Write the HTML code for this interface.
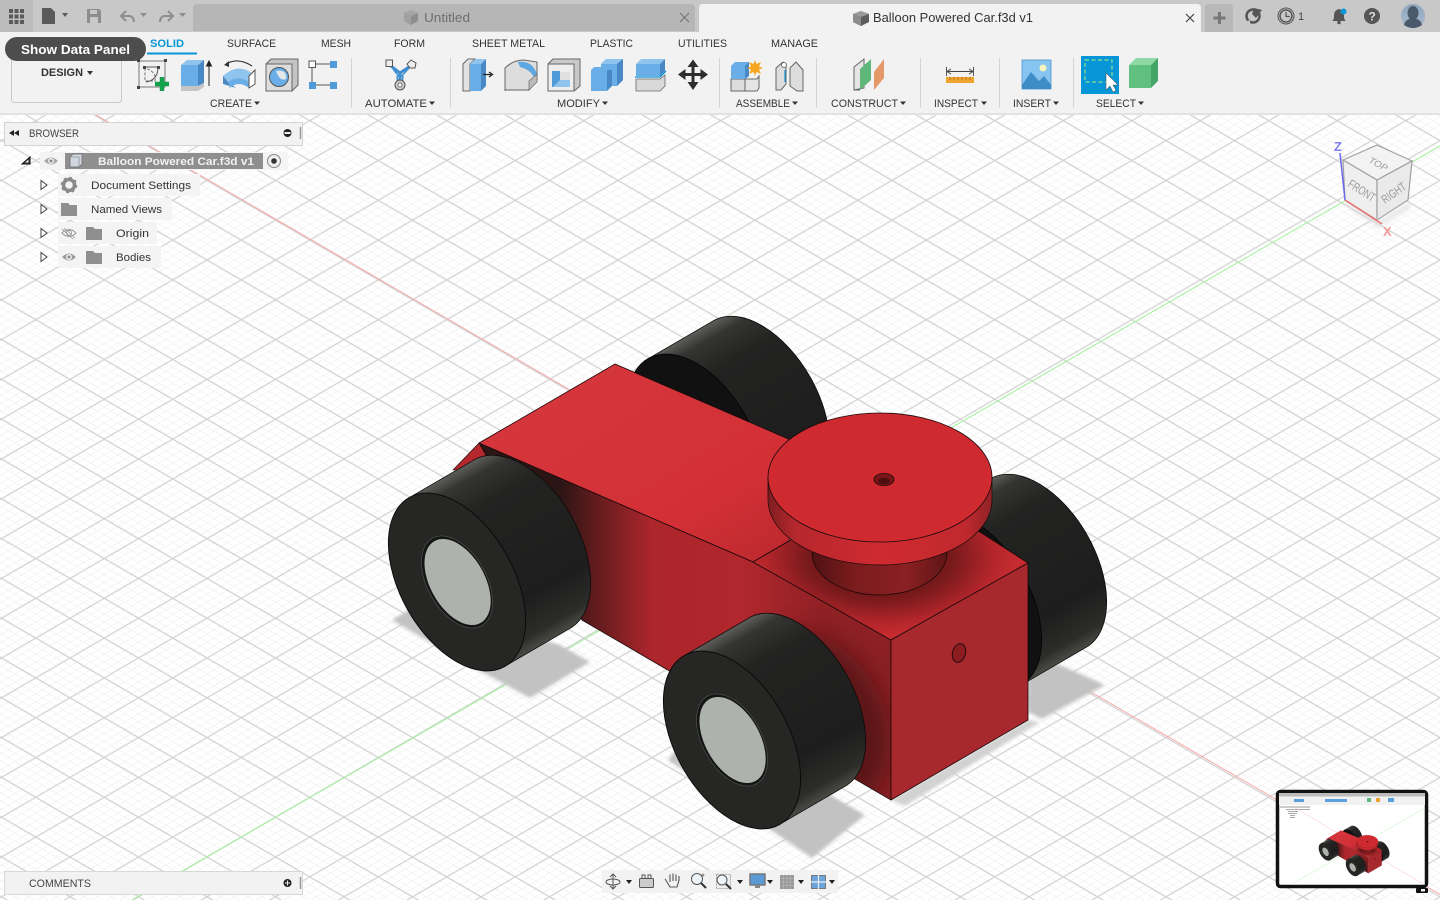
<!DOCTYPE html>
<html><head><meta charset="utf-8"><title>Balloon Powered Car.f3d v1</title>
<style>html,body{margin:0;padding:0;background:#fff;overflow:hidden}svg{display:block}
text{font-family:"Liberation Sans",sans-serif;fill:#333;font-size:11px}</style></head><body>
<svg xmlns="http://www.w3.org/2000/svg" width="1440" height="900" viewBox="0 0 1440 900">
<defs>
<pattern id="grid" patternUnits="userSpaceOnUse" width="100" height="100" patternTransform="matrix(.3425 .199 .3425 -.199 70 658)">
<path d="M20 0V100M40 0V100M60 0V100M80 0V100M0 20H100M0 40H100M0 60H100M0 80H100" stroke="#f3f3f3" stroke-width="2.400" fill="none"/>
<path d="M0 0V100M100 0V100M0 0H100M0 100H100" stroke="#d2d2d2" stroke-width="3.600" fill="none"/>
</pattern>
<filter id="b1" x="-20%" y="-20%" width="140%" height="140%"><feGaussianBlur stdDeviation="1.500"/></filter>
<filter id="b8" x="-40%" y="-40%" width="180%" height="180%"><feGaussianBlur stdDeviation="12"/></filter>
<linearGradient id="tg" gradientUnits="userSpaceOnUse" x1="-48" y1="-84" x2="48" y2="84">
<stop offset="0" stop-color="#5c5c58"/><stop offset=".07" stop-color="#343432"/><stop offset=".22" stop-color="#232322"/><stop offset=".75" stop-color="#1d1d1d"/><stop offset=".93" stop-color="#2c2c2a"/><stop offset="1" stop-color="#4c4c46"/>
</linearGradient>
<linearGradient id="side" gradientUnits="userSpaceOnUse" x1="560" y1="0" x2="890" y2="0">
<stop offset="0" stop-color="#2c1515"/><stop offset=".1" stop-color="#5e1b1c"/><stop offset=".28" stop-color="#ad262c"/><stop offset=".55" stop-color="#b0272d"/><stop offset=".8" stop-color="#8f2125"/><stop offset="1" stop-color="#8b2024"/>
</linearGradient>
<linearGradient id="topf" x1="0" y1="0" x2="1" y2="1"><stop offset="0" stop-color="#d4383d"/><stop offset=".7" stop-color="#d33036"/><stop offset="1" stop-color="#b8282d"/></linearGradient>
<radialGradient id="blk" gradientUnits="userSpaceOnUse" cx="880" cy="555" r="135" gradientTransform="translate(0 235) scale(1 .58)">
<stop offset="0" stop-color="#4a1011"/><stop offset=".55" stop-color="#7a1a1c"/><stop offset=".85" stop-color="#b4262b"/><stop offset="1" stop-color="#c62b30"/>
</radialGradient>
<linearGradient id="dsk" x1="0" y1="0" x2="1" y2="0"><stop offset="0" stop-color="#7d1d20"/><stop offset=".12" stop-color="#b5282d"/><stop offset=".5" stop-color="#cf2a30"/><stop offset=".88" stop-color="#c0292e"/><stop offset="1" stop-color="#8f2226"/></linearGradient>
<linearGradient id="cyl" x1="0" y1="0" x2="1" y2="0"><stop offset="0" stop-color="#4f1213"/><stop offset=".3" stop-color="#7a1b1d"/><stop offset=".7" stop-color="#8a2023"/><stop offset="1" stop-color="#5f1516"/></linearGradient>
<linearGradient id="av" x1="0" y1="0" x2="0" y2="1"><stop offset="0" stop-color="#8ea6bd"/><stop offset="1" stop-color="#a9bcce"/></linearGradient>
<path id="tread" d="M-48,-84.200 L19,-123.200 A56.600,97 -29.500 0 1 115,45.200 L48,84.200 A56.600,97 -29.500 0 1 -48,-84.200 Z" fill="url(#tg)" stroke="#0a0a0a" stroke-width=".8"/>
<g id="fw"><use href="#tread"/>
<ellipse rx="56.600" ry="97" transform="rotate(-29.500)" fill="#262625" stroke="#080808" stroke-width=".9"/>
<ellipse rx="29.300" ry="50.200" transform="rotate(-29.500)" fill="#151515" stroke="#555" stroke-width=".6"/>
<ellipse cx=".5" cy=".3" rx="27.200" ry="47" transform="rotate(-29.500)" fill="#adb2ad"/></g>
<g id="rw"><use href="#tread"/><ellipse rx="56.600" ry="97" transform="rotate(-29.500)" fill="#111" stroke="#050505" stroke-width=".9"/></g>
<clipPath id="sc"><path d="M479,443 L753,562 L891,640 V800 L582,620 Z"/></clipPath>
<g id="car">
<use href="#rw" x="696" y="443"/><use href="#rw" x="973" y="601"/>
<path d="M479,443 L453,470 L500,470 Z" fill="#b5292e" stroke="#1a0808" stroke-width=".6"/>
<path d="M615,364 L479,443 L753,562 L789,541 L800,444 Z" fill="url(#topf)" stroke="#1a0808" stroke-width=".8" stroke-linejoin="round"/>
<path d="M479,443 L753,562 L891,640 V800 L582,620 Z" fill="url(#side)" stroke="#1a0808" stroke-width=".8" stroke-linejoin="round"/>
<g clip-path="url(#sc)"><ellipse cx="810" cy="722" rx="74" ry="96" transform="rotate(-30 810 722)" fill="#300c0c" opacity=".55" filter="url(#b8)"/></g>
<path d="M753,562 L891,640 L1028,563 L980,532 L880,470 L789,541 Z" fill="url(#blk)" stroke="#1a0808" stroke-width=".8" stroke-linejoin="round"/>
<path d="M891,640 L1028,563 V720 L891,800 Z" fill="#a7282d" stroke="#1a0808" stroke-width=".8" stroke-linejoin="round"/>
<ellipse cx="959" cy="653" rx="6.500" ry="9.500" transform="rotate(15 959 653)" fill="#8b1c20" stroke="#1a0808" stroke-width=".9"/>
<path d="M812,553 A67.500,42 0 0 0 947,553 Z" fill="url(#cyl)" stroke="#1a0808" stroke-width=".8"/>
<path d="M768,477 V500 A112,65 0 0 0 992,500 V477 Z" fill="url(#dsk)" stroke="#1a0808" stroke-width=".7"/>
<ellipse cx="880" cy="477.500" rx="112" ry="64.500" fill="#d02a31" stroke="#1a0808" stroke-width=".8"/>
<ellipse cx="884" cy="479.500" rx="10" ry="6" fill="#7d1518" stroke="#1a0808" stroke-width=".8"/>
<ellipse cx="884" cy="481" rx="6" ry="3.200" fill="#4d0e10"/>
<use href="#fw" x="457" y="582"/><use href="#fw" x="732" y="740"/>
</g>
</defs>

<!-- viewport -->
<rect width="1440" height="900" fill="#fff"/>
<rect y="113" width="1440" height="787" fill="url(#grid)"/>
<path d="M0,59.300 L1440,894.500" stroke="#f9a8a8" stroke-width="1"/>
<path d="M132,900 L1440,146" stroke="#a6f0a0" stroke-width="1.100"/>

<!-- shadows -->
<g filter="url(#b1)" fill="#c2c2c2">
<path d="M392,620 L420,603 L560,645 L590,662 L530,698 L460,660 Z"/>
<path d="M668,760 L700,720 L865,815 L812,858 Z"/>
<path d="M1028,660 L1060,665 L1105,685 L1042,719 L1028,712 Z"/>
<path d="M891,800 L1028,720 L1040,722 L905,806 Z" fill="#d2d2d2"/>
</g>
<use href="#car"/>

<!-- view cube -->
<g>
<path d="M1343,160 L1377,145 L1412,161 L1377,180 Z" fill="#f3f3f3" stroke="#a0a0a0" stroke-width="1.200"/>
<path d="M1343,160 L1377,180 V220 L1345,200 Z" fill="#efefef" stroke="#a0a0a0" stroke-width="1.200"/>
<path d="M1377,180 L1412,161 L1408,200 L1377,220 Z" fill="#eaeaea" stroke="#a0a0a0" stroke-width="1.200"/>
<path d="M1345,200 L1377,220 L1408,202 L1412,208 L1378,229 L1350,210 Z" fill="#ddd" opacity=".5" filter="url(#b1)"/>
<text transform="translate(1368,162) rotate(28)" textLength="20" lengthAdjust="spacingAndGlyphs" style="font-size:9px;fill:#9a9a9a;font-style:italic">TOP</text>
<text transform="translate(1347,186) rotate(32)" textLength="30" lengthAdjust="spacingAndGlyphs" style="font-size:12px;fill:#9a9a9a">FRONT</text>
<text transform="translate(1385,204) rotate(-35)" textLength="27" lengthAdjust="spacingAndGlyphs" style="font-size:12px;fill:#9a9a9a">RIGHT</text>
<path d="M1340,153 L1345,200" stroke="#6a6aee" stroke-width="1.500"/>
<path d="M1345,200 L1382,224" stroke="#e87070" stroke-width="1.500"/>
<text x="1334" y="151" style="font-size:13px;font-weight:bold;fill:#8080f0">Z</text>
<text x="1383" y="236" style="font-size:13px;font-weight:bold;fill:#f59a9a">X</text>
</g>

<!-- ribbon -->
<rect y="0" width="1440" height="32" fill="#c8c8c8"/>
<rect y="32" width="1440" height="81" fill="#f2f2f2"/>
<rect y="113" width="1440" height="2" fill="#e2e2e2"/>
<rect x="0" y="0" width="33" height="32" fill="#bcbcbc"/>
<g fill="#5a5a5a"><rect x="9" y="9" width="4" height="4"/><rect x="14.500" y="9" width="4" height="4"/><rect x="20" y="9" width="4" height="4"/><rect x="9" y="14.500" width="4" height="4"/><rect x="14.500" y="14.500" width="4" height="4"/><rect x="20" y="14.500" width="4" height="4"/><rect x="9" y="20" width="4" height="4"/><rect x="14.500" y="20" width="4" height="4"/><rect x="20" y="20" width="4" height="4"/></g>
<path d="M42,8 H51 L55,12 V24 H42 Z" fill="#5a5a5a"/><path d="M62,13 H68 L65,17 Z" fill="#5a5a5a"/>
<path d="M87,9 H99 L101,11 V23 H87 Z" fill="#8d8d8d"/><rect x="90" y="10" width="7" height="4" fill="#c8c8c8"/><rect x="90" y="17" width="8" height="6" fill="#c8c8c8"/>
<path d="M126,11 L121,16 L126,21 M121,16 H130 Q134,17 134,22" fill="none" stroke="#8d8d8d" stroke-width="2"/><path d="M140,13 H147 L143.500,17 Z" fill="#8d8d8d"/>
<path d="M168,11 L173,16 L168,21 M173,16 H164 Q160,17 160,22" fill="none" stroke="#8d8d8d" stroke-width="2"/><path d="M179,13 H186 L182.500,17 Z" fill="#8d8d8d"/>

<!-- tabs -->
<path d="M193,31 V8 Q193,4 197,4 H691 Q695,4 695,8 V31 Z" fill="#b6b6b6"/>
<path d="M404,13 L411,10 L418,13 V21 L411,25 L404,21 Z" fill="#8e8e8e"/><path d="M404,13 L411,16 L418,13 L411,10 Z" fill="#a6a6a6"/><path d="M404,13 L411,16 V25 L404,21 Z" fill="#a0a0a0"/>
<text x="424" y="22" textLength="46" lengthAdjust="spacingAndGlyphs" style="font-size:12.500px;fill:#6e6e6e">Untitled</text>
<path d="M680,13 L689,22 M689,13 L680,22" stroke="#777" stroke-width="1.200"/>
<path d="M699,32 V8 Q699,4 703,4 H1197 Q1201,4 1201,8 V32 Z" fill="#f2f2f2"/>
<path d="M853,14 L861,11 L869,14 V22 L861,26 L853,22 Z" fill="#5d5d5d"/><path d="M853,14 L861,17 V26 L853,22 Z" fill="#8c8c8c"/><path d="M853,14 L861,17 L869,14 L861,11 Z" fill="#9a9a9a"/>
<text x="873" y="22" textLength="160" lengthAdjust="spacingAndGlyphs" style="font-size:12.500px;fill:#333">Balloon Powered Car.f3d v1</text>
<path d="M1186,14 L1194,22 M1194,14 L1186,22" stroke="#444" stroke-width="1.200"/>
<path d="M1205,32 V8 Q1205,4 1209,4 H1229 Q1233,4 1233,8 V32 Z" fill="#b8b8b8"/>
<path d="M1219.500,12 V24 M1213.500,18 H1225.500" stroke="#777" stroke-width="3"/>
<!-- right icons -->
<circle cx="1253" cy="16" r="6.500" fill="none" stroke="#555" stroke-width="2.500"/><path d="M1254,8 L1262,10 L1256,18 L1252,14 Z" fill="#555"/><path d="M1245,22 L1250,20 L1250,25 Z" fill="#c8c8c8"/>
<circle cx="1286" cy="16" r="8" fill="none" stroke="#555" stroke-width="1"/><circle cx="1286" cy="16" r="6" fill="none" stroke="#555" stroke-width="1.500"/><path d="M1286,12 V16.500 H1290" fill="none" stroke="#555" stroke-width="1.200"/>
<text x="1298" y="20" style="font-size:11px;fill:#444">1</text>
<path d="M1339,9 Q1344,10 1344,16 Q1344,20 1346,21 H1332 Q1334,20 1334,16 Q1334,10 1339,9 Z" fill="#555"/><circle cx="1339" cy="22.500" r="1.800" fill="#555"/><circle cx="1343.500" cy="11.500" r="3" fill="#0696d7"/>
<circle cx="1372" cy="16" r="8" fill="#555"/><text x="1368.500" y="20.500" style="font-size:12px;font-weight:bold;fill:#ddd">?</text>
<circle cx="1413" cy="16" r="12" fill="url(#av)"/><ellipse cx="1413" cy="13" rx="5.500" ry="7" fill="#4a5a6c"/><path d="M1404,25 Q1405,19 1413,18 Q1421,19 1422,25 Q1413,31 1404,25 Z" fill="#4a5a6c"/>

<!-- ribbon tabs -->
<text x="150" y="47" textLength="34" lengthAdjust="spacingAndGlyphs" style="font-weight:bold;fill:#0696d7">SOLID</text>
<rect x="147" y="52.500" width="50" height="2" fill="#0696d7"/>
<text x="227" y="47" textLength="49" lengthAdjust="spacingAndGlyphs">SURFACE</text>
<text x="321" y="47" textLength="30" lengthAdjust="spacingAndGlyphs">MESH</text>
<text x="394" y="47" textLength="31" lengthAdjust="spacingAndGlyphs">FORM</text>
<text x="472" y="47" textLength="73" lengthAdjust="spacingAndGlyphs">SHEET METAL</text>
<text x="590" y="47" textLength="43" lengthAdjust="spacingAndGlyphs">PLASTIC</text>
<text x="678" y="47" textLength="49" lengthAdjust="spacingAndGlyphs">UTILITIES</text>
<text x="771" y="47" textLength="47" lengthAdjust="spacingAndGlyphs">MANAGE</text>

<!-- design -->
<rect x="11.500" y="56" width="110" height="46.500" rx="3" fill="#f2f2f2" stroke="#c9c9c9"/>
<text x="41" y="76" textLength="42" lengthAdjust="spacingAndGlyphs" style="font-weight:bold;fill:#333">DESIGN</text>
<path d="M87,71 H93 L90,75 Z" fill="#333"/>
<rect x="5" y="37" width="141" height="24" rx="12" fill="#4d4d4d"/>
<text x="21" y="54" textLength="109" lengthAdjust="spacingAndGlyphs" style="font-size:13px;font-weight:bold;fill:#fff">Show Data Panel</text>

<!-- separators -->
<path d="M351.500,58V108M450.500,58V108M719.500,58V108M816.500,58V108M920.500,58V108M999.500,58V108M1073.500,58V108" stroke="#d4d4d4"/>

<!-- group labels -->
<g>
<text x="210" y="107" textLength="42" lengthAdjust="spacingAndGlyphs">CREATE</text>
<text x="365" y="107" textLength="62" lengthAdjust="spacingAndGlyphs">AUTOMATE</text>
<text x="557" y="107" textLength="43" lengthAdjust="spacingAndGlyphs">MODIFY</text>
<text x="736" y="107" textLength="54" lengthAdjust="spacingAndGlyphs">ASSEMBLE</text>
<text x="831" y="107" textLength="67" lengthAdjust="spacingAndGlyphs">CONSTRUCT</text>
<text x="934" y="107" textLength="44" lengthAdjust="spacingAndGlyphs">INSPECT</text>
<text x="1013" y="107" textLength="38" lengthAdjust="spacingAndGlyphs">INSERT</text>
<text x="1096" y="107" textLength="40" lengthAdjust="spacingAndGlyphs">SELECT</text>
<path d="M254,101.500H260L257,105ZM429,101.500H435L432,105ZM602,101.500H608L605,105ZM792,101.500H798L795,105ZM900,101.500H906L903,105ZM981,101.500H987L984,105ZM1053,101.500H1059L1056,105ZM1138,101.500H1144L1141,105Z" fill="#333"/>
</g>

<!-- CREATE icons -->
<path d="M139,61 H165 V87 H139 Z" fill="none" stroke="#777" stroke-width="1"/>
<path d="M145,68 V81 H155 Q157,72 145,68 Z" fill="none" stroke="#777" stroke-width="1" stroke-dasharray="3 1.500"/>
<path d="M145,67 H158 M158,67 Q158,80 146,82" fill="none" stroke="#555" stroke-width="1"/>
<g fill="#444"><rect x="137" y="59" width="3" height="3"/><rect x="164" y="59" width="3" height="3"/><rect x="137" y="86" width="3" height="3"/><rect x="143" y="66" width="3" height="3"/><rect x="157" y="66" width="3" height="3"/></g>
<path d="M162,77 V91 M155,84 H169" stroke="#12a14b" stroke-width="4.500"/>
<path d="M181,65 L187,60 H204 L198,65 Z" fill="#8fc4ee"/><path d="M198,65 L204,60 V83 L198,86 Z" fill="#4888c4"/><rect x="181" y="65" width="17" height="21" fill="#69aee6"/>
<path d="M181,86 H198 L204,83 V87 L198,91 H181 Z" fill="#c5c5c5"/>
<path d="M209,86 V63 M206.500,66 L209,61 L211.500,66 Z" stroke="#222" stroke-width="1" fill="#222"/>
<path d="M226,64 Q238,57 252,66" fill="none" stroke="#333" stroke-width="1.200"/><path d="M224,65 L229,61 V67 Z" fill="#333"/>
<path d="M223,76 Q238,62 253,74 L249,82 Q238,74 228,82 Z" fill="#8fc4ee"/><path d="M223,76 V84 L236,88 L228,82 Z" fill="#4888c4"/><path d="M228,82 Q238,74 249,82 V88 Q238,80 230,88 Z" fill="#69aee6"/>
<path d="M249,76 L255,70 V84 L249,88 Z" fill="#fff" stroke="#555"/>
<path d="M266,64 L271,59 H298 V85 L292,91 H266 Z" fill="#c4c4c4" stroke="#666"/><rect x="266" y="64" width="26" height="27" fill="#ddd" stroke="#666"/><circle cx="279" cy="77" r="9.500" fill="#69aee6" stroke="#555"/><path d="M276,71 Q287,69 286,79 Q280,82 276,71 Z" fill="#e6e6e6"/>
<path d="M312,64 H333 M312,64 V85 M312,85 H333" stroke="#555" stroke-width="1"/>
<rect x="309" y="61" width="6.500" height="6.500" fill="#fff" stroke="#555"/><rect x="330" y="61" width="7" height="7" fill="#4f9ad9"/><rect x="309" y="82" width="7" height="7" fill="#4f9ad9"/><rect x="330" y="82" width="7" height="7" fill="#4f9ad9"/>

<!-- AUTOMATE -->
<path d="M391,66 L400,73 L412,65 M400,73 V83" stroke="#3f8fd0" stroke-width="3" fill="none"/><path d="M393,69 L400,78 L409,68 M397,76 L398,84 M403,76 L402,84" stroke="#3f8fd0" stroke-width="1.500" fill="none"/>
<rect x="386" y="60" width="6.500" height="6.500" fill="#eee" stroke="#555"/><path d="M411,60 L416,63 L415,68 L410,68 L407,64 Z" fill="#eee" stroke="#555"/>
<circle cx="400" cy="85" r="5" fill="#ccc" stroke="#555"/><circle cx="400" cy="85" r="2" fill="#fff" stroke="#555" stroke-width=".8"/>

<!-- MODIFY -->
<path d="M463,91 V64 L468,59 H475 L470,64 V91 Z" fill="#e2e2e2" stroke="#666"/>
<path d="M470,64 L475,59 H486 L481,64 Z" fill="#8fc4ee"/><path d="M481,64 L486,59 V86 L481,91 Z" fill="#4888c4"/><rect x="470" y="64" width="11" height="27" fill="#69aee6"/>
<path d="M483,74.500 H491 M489,72 L492.500,74.500 L489,77" stroke="#222" stroke-width="1.300" fill="none"/>
<path d="M505,91 V68 Q513,60 524,60 L537,62 V80 L529,90 H505 Z" fill="#ddd" stroke="#666"/>
<path d="M518,62 Q532,60 537,74 L535,80 Q532,70 520,67 Z" fill="#5ea6e2"/><path d="M529,90 V81 L537,74 V82 Z" fill="#bbb" stroke="#666" stroke-width=".7"/>
<path d="M548,64 L553,59 H580 V86 L574,91 H548 Z" fill="#c9c9c9" stroke="#666"/><rect x="548" y="64" width="26" height="27" fill="#eee" stroke="#666"/>
<rect x="552" y="72" width="18" height="15" fill="#e0e0e0"/><path d="M552,71 H560 V80 H570 V87 H552 Z" fill="#4f9ad9"/><path d="M560,80 H570 V87 H553 Z" fill="#8fc4ee"/>
<path d="M591,70 L594,67 H601 V64 L606,59 H623 V80 L617,86 H607 V91 H591 Z" fill="#69aee6"/><path d="M601,64 L606,59 H623 L617,64 Z" fill="#8fc4ee"/><path d="M617,64 L623,59 V80 L617,86 Z" fill="#4888c4"/><path d="M607,70 V91 L612,86 V70 Z" fill="#4888c4"/>
<path d="M636,64 L641,59 H665 L660,64 Z" fill="#8fc4ee"/><path d="M660,64 L665,59 V71 L660,76 Z" fill="#4888c4"/><rect x="636" y="64" width="24" height="12" fill="#69aee6"/>
<path d="M635,77 H660 L666,71" stroke="#0696d7" stroke-width="1.300" fill="none"/>
<path d="M636,79 H660 L665,75 V86 L660,91 H636 Z" fill="#d9d9d9" stroke="#666" stroke-width=".8"/>
<path d="M693,59.500 L698.500,67 H694.500 V73 H700.500 V69 L708,74.500 L700.500,80 V76 H694.500 V82 H698.500 L693,90 L687.500,82 H691.500 V76 H685.500 V80 L678,74.500 L685.500,69 V73 H691.500 V67 H687.500 Z" fill="#2d2d2d"/>

<!-- ASSEMBLE -->
<rect x="731" y="79" width="14" height="12" fill="#ddd" stroke="#666"/><path d="M745,79 H757 L759,76 V88 L757,91 H745 Z" fill="#e5e5e5" stroke="#666"/>
<path d="M731,66 L735,62 H749 V76 L745,79 H731 Z" fill="#69aee6"/><path d="M745,66 L749,62 V76 L745,79 Z" fill="#4888c4"/>
<path d="M755,60 L756.500,64 L761,62 L759,66.500 L763,68 L759,69.500 L761,74 L756.500,72 L755,76 L753.500,72 L749,74 L751,69.500 L747,68 L751,66.500 L749,62 L753.500,64 Z" fill="#f5a623"/>
<path d="M776,90 V68 L783,62 L786,66 V84 L781,90 Z" fill="#ddd" stroke="#666"/><path d="M803,91 V70 L796,62 L790,68 V86 L797,91 Z" fill="#ddd" stroke="#666"/>
<path d="M785,70 V82" stroke="#0696d7" stroke-width="1.200"/><circle cx="784" cy="65" r="2.500" fill="#fff" stroke="#555" stroke-width=".8"/>

<!-- CONSTRUCT -->
<path d="M854,90 V67 L864,59 V88 Z" fill="#e5e5e5" stroke="#666"/><path d="M860,90 V69 L871,59 V80 Z" fill="#5fb87a"/>
<path d="M874,90 V72 L884,59 V78 Z" fill="#e5986a"/>
<path d="M860,90 H854" stroke="#666"/>

<!-- INSPECT -->
<path d="M946.500,67 V76 M973.500,67 V76" stroke="#555"/><path d="M948,71.500 H972 M951,69 L947,71.500 L951,74 M969,69 L973,71.500 L969,74" stroke="#444" fill="none"/>
<rect x="946" y="77" width="28" height="6" fill="#f0a330"/><path d="M950,77V80M954,77V80M958,77V80M962,77V80M966,77V80M970,77V80" stroke="#a86a10" stroke-width=".7"/>

<!-- INSERT -->
<rect x="1022" y="60" width="29" height="29" fill="#87c4f0" stroke="#4d94cf" stroke-width=".8"/><circle cx="1043" cy="68" r="3.500" fill="#f7f3c0"/>
<path d="M1022,85 L1031,72 L1039,81 L1044,76 L1051,85 V89 H1022 Z" fill="#3f8dc7"/>

<!-- SELECT -->
<rect x="1081" y="56" width="38" height="38" fill="#0696d7"/>
<rect x="1085" y="60" width="27" height="22" fill="none" stroke="#8fe08f" stroke-width="1.200" stroke-dasharray="4 2.500"/>
<path d="M1106,73 V90 L1110,86 L1113,92 L1116,90.500 L1113,85 L1118,85 Z" fill="#fff" stroke="#444" stroke-width=".5"/>
<path d="M1129,65 L1136,58 H1158 L1151,65 Z" fill="#8ed9a4"/><path d="M1151,65 L1158,58 V81 L1151,88 Z" fill="#45a566"/><rect x="1129" y="65" width="22" height="23" fill="#5fc07f"/>

<!-- browser -->
<rect x="4.500" y="122.500" width="298" height="23" fill="#f2f2f2" stroke="#d4d4d4"/>
<path d="M9,133 L14,130 V136 Z M14,133 L19,130 V136 Z" fill="#222"/>
<text x="29" y="137" textLength="50" lengthAdjust="spacingAndGlyphs" style="fill:#444">BROWSER</text>
<circle cx="287.500" cy="133" r="4" fill="#222"/><rect x="284.500" y="132" width="6" height="2" fill="#eee"/>
<path d="M300.500,127V139" stroke="#999" stroke-width="1.500"/>

<rect x="40" y="152" width="248" height="18" fill="#f3f3f3" opacity=".95"/>
<path d="M22,164 H30 V157 Z" fill="#333" stroke="#111"/><path d="M25,162.500H28.500V159.500Z" fill="#eee"/>
<path d="M44,161 Q51,154 58,161 Q51,168 44,161 Z" fill="#a8a8a8"/><circle cx="51" cy="161" r="3" fill="#eee"/><circle cx="51" cy="161" r="1.500" fill="#888"/>
<rect x="65" y="153" width="198" height="16" fill="#8f8f8f"/>
<path d="M70,157 L73,154 H82 V164 L79,167 H70 Z" fill="#cfd6e0" stroke="#666" stroke-width=".7"/><path d="M70,157 H79 V167" fill="none" stroke="#777" stroke-width=".6"/>
<text x="98" y="165" textLength="156" lengthAdjust="spacingAndGlyphs" style="font-weight:bold;fill:#f2f2f2">Balloon Powered Car.f3d v1</text>
<circle cx="274" cy="161" r="6.500" fill="#eee" stroke="#888"/><circle cx="274" cy="161" r="2.800" fill="#333"/>

<rect x="58" y="174" width="142" height="22" fill="#f4f4f4"/>
<rect x="58" y="198" width="114" height="22" fill="#f4f4f4"/>
<rect x="58" y="222" width="99" height="22" fill="#f4f4f4"/>
<rect x="58" y="246" width="103" height="22" fill="#f4f4f4"/>
<path d="M41,180.500 L47,185 L41,189.500 Z M41,204.500 L47,209 L41,213.500 Z M41,228.500 L47,233 L41,237.500 Z M41,252.500 L47,257 L41,261.500 Z" fill="#fff" stroke="#444"/>
<circle cx="69" cy="185" r="5.500" fill="none" stroke="#8a8a8a" stroke-width="3.500"/><circle cx="69" cy="185" r="7" fill="none" stroke="#8a8a8a" stroke-width="2.500" stroke-dasharray="2.600 2.900"/>
<path d="M61,203 H68 L70,205 H77 V216 H61 Z" fill="#8f8f8f"/>
<path d="M86,227 H93 L95,229 H102 V240 H86 Z M86,251 H93 L95,253 H102 V264 H86 Z" fill="#8f8f8f"/>
<text x="91" y="189" textLength="100" lengthAdjust="spacingAndGlyphs">Document Settings</text>
<text x="91" y="213" textLength="71" lengthAdjust="spacingAndGlyphs">Named Views</text>
<text x="116" y="237" textLength="33" lengthAdjust="spacingAndGlyphs">Origin</text>
<text x="116" y="261" textLength="35" lengthAdjust="spacingAndGlyphs">Bodies</text>
<path d="M62,233 Q69,226 76,233 Q69,240 62,233 Z" fill="none" stroke="#999"/><circle cx="69" cy="233" r="2.500" fill="none" stroke="#999"/><path d="M64,228 L75,238 M62,229 L73,239" stroke="#999" stroke-width=".8"/>
<path d="M62,257 Q69,250 76,257 Q69,264 62,257 Z" fill="#9a9a9a"/><circle cx="69" cy="257" r="3" fill="#eee"/><circle cx="69" cy="257" r="1.500" fill="#888"/>

<!-- comments -->
<rect x="4.500" y="871.500" width="298" height="23" fill="#f2f2f2" stroke="#d8d8d8"/>
<text x="29" y="887" textLength="62" lengthAdjust="spacingAndGlyphs" style="fill:#444">COMMENTS</text>
<circle cx="287.500" cy="883" r="4" fill="#222"/><path d="M285,883H290M287.500,880.500V885.500" stroke="#eee"/>
<path d="M300.500,877V889" stroke="#999" stroke-width="1.500"/>

<!-- bottom toolbar -->
<rect x="602" y="870" width="236" height="23" fill="#f2f2f2"/>
<path d="M613,874 V889 M610,877 L613,874 L616,877 M610,886 L613,889 L616,886" fill="none" stroke="#555"/><ellipse cx="613" cy="882" rx="7" ry="3" fill="none" stroke="#555"/>
<rect x="639.500" y="878.500" width="14" height="9" rx="1" fill="#ccc" stroke="#555"/><path d="M642,878V875H645V878M648,878V875H651V878" fill="none" stroke="#555"/>
<path d="M667,882 L670,887 H677 L679,880 V876 M670,882 V874.500 M673,881 V873.500 M676,881 V874.500 M679,881 V876 M667,882 L665,879" fill="none" stroke="#555" stroke-width="1.100"/>
<circle cx="697" cy="879" r="5.500" fill="#eef5fa" stroke="#555"/><path d="M701,883 L706,888" stroke="#333" stroke-width="2"/><path d="M703,873.500V876.500M701.500,875H704.500" stroke="#555" stroke-width=".7"/>
<rect x="716.500" y="874.500" width="14" height="14" fill="#eee" stroke="#aaa" stroke-dasharray="2 1"/><circle cx="722" cy="880" r="5" fill="#eef5fa" stroke="#555"/><path d="M726,884 L731,889" stroke="#333" stroke-width="2"/>
<rect x="750" y="874" width="15" height="11" fill="#5a9bd5" stroke="#777" stroke-width="1.500"/><rect x="755" y="885" width="5" height="3" fill="#888"/>
<rect x="780" y="875" width="14" height="14" fill="#999"/><path d="M783.500,875V889M787,875V889M790.500,875V889M780,878.500H794M780,882H794M780,885.500H794" stroke="#bbb" stroke-width=".6"/>
<rect x="811.500" y="875.500" width="14" height="13" fill="#6aa5dc" stroke="#777"/><path d="M818.500,875V889M811,882H826" stroke="#eee" stroke-width="1.200"/>
<path d="M626,880H632L629,884ZM737,880H743L740,884ZM767,880H773L770,884ZM798,880H804L801,884ZM829,880H835L832,884Z" fill="#222"/>

<!-- thumbnail -->
<rect x="1277.500" y="791.500" width="149" height="95" rx="3" fill="#fff" stroke="#111" stroke-width="3.500"/>
<rect x="1279" y="793" width="146" height="3.500" fill="#bbb"/><rect x="1279" y="796.500" width="146" height="8.500" fill="#f1f1f1"/>
<g fill="#5b9fdc"><rect x="1294" y="799" width="10" height="3"/><rect x="1325" y="799" width="22" height="3"/><rect x="1388" y="798" width="6" height="4"/></g><rect x="1367" y="798" width="4" height="4" fill="#5fb87a"/><rect x="1376" y="798" width="4" height="4" fill="#f0a330"/>
<rect x="1280" y="806" width="30" height="2" fill="#ccc"/><path d="M1286,809.500H1310M1288,811.500H1298M1288,813.500H1297M1290,815.500H1295M1290,817.500H1295" stroke="#aaa" stroke-width="1"/>
<path d="M1292,806 L1425,885" stroke="#f8c0c0" stroke-width=".5"/><path d="M1292,884 L1425,808" stroke="#bdf0b8" stroke-width=".5"/>
<use href="#car" transform="translate(1280.500 794.500) scale(.0985 .0985)"/>
<rect x="1416" y="888" width="12" height="5" rx="1" fill="#111"/><rect x="1421" y="889" width="4" height="2.500" fill="#eee"/>
</svg>
</body></html>
